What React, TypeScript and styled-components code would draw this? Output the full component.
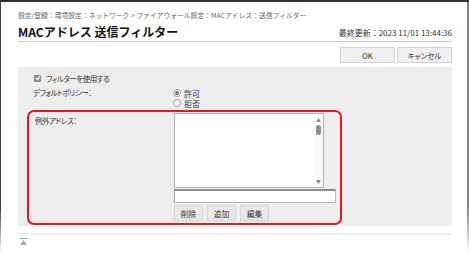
import React from "react";
import styled, { createGlobalStyle } from "styled-components";

const GlobalStyle = createGlobalStyle`
  html, body { margin: 0; padding: 0; background: #fff; }
  body { font-family: "Noto Sans CJK JP", "Noto Sans", sans-serif; }
  * { box-sizing: border-box; }
`;

const Frame = styled.div`
  position: relative;
  width: 469px;
  height: 254px;
  overflow: hidden;
  border-top: 2px solid #333;
  padding: 7px 17px 0 18px;
  background: #fff;
  &::before {
    content: "";
    position: absolute;
    left: 0;
    top: 0;
    bottom: 0;
    width: 1px;
    background: linear-gradient(to bottom, #444 0%, #444 82%, rgba(68,68,68,0) 100%);
  }
  &::after {
    content: "";
    position: absolute;
    right: 0;
    top: 0;
    bottom: 0;
    width: 2px;
    background: linear-gradient(to bottom, #808080 0%, #808080 80%, rgba(128,128,128,0) 100%);
  }
`;

const Breadcrumb = styled.div`
  font-size: 6.8px;
  line-height: 12px;
  height: 12px;
  color: #666;
  white-space: nowrap;
`;

const HeaderRow = styled.div`
  margin-top: 3px;
  display: flex;
  justify-content: space-between;
  align-items: flex-end;
  border-bottom: 1px solid #ccc;
  padding-bottom: 2px;
`;

const Title = styled.h1`
  margin: 0;
  font-size: 12px;
  line-height: 15px;
  font-weight: 700;
  color: #111;
`;

const Updated = styled.div`
  font-size: 8px;
  line-height: 10px;
  color: #333;
  padding-bottom: 1px;
  white-space: nowrap;
`;

const ButtonRow = styled.div`
  margin-top: 5px;
  display: flex;
  justify-content: flex-end;
  gap: 2px;
`;

const MainButton = styled.button`
  width: 55px;
  height: 16px;
  padding: 0;
  background: #efefef;
  border: 1px solid #d2d2d2;
  font-family: inherit;
  font-size: 7.5px;
  font-feature-settings: "palt";
  color: #333;
`;

const Panel = styled.div`
  margin-top: 4px;
  background: #eeeeee;
  padding: 5px 0 1px 9px;
`;

const CheckRow = styled.label`
  height: 12px;
  display: flex;
  align-items: center;
  gap: 5px;
  padding-left: 7px;
  font-size: 7.5px;
  font-feature-settings: "palt";
  letter-spacing: -0.5px;
  color: #333;
`;

const CheckBox = styled.span`
  width: 7px;
  height: 7px;
  border-radius: 1px;
  background: #8c8c8c;
  display: flex;
  align-items: center;
  justify-content: center;
`;

const FieldGrid = styled.div<{ $label: number }>`
  display: grid;
  grid-template-columns: ${(p) => p.$label}px 1fr;
  align-items: start;
`;

const PolicyRow = styled(FieldGrid)`
  margin-top: 4px;
  padding-left: 6px;
`;

const Label = styled.div<{ $top?: number }>`
  font-size: 7.5px;
  line-height: 10px;
  color: #333;
  font-feature-settings: "palt";
  letter-spacing: -0.5px;
  margin-top: ${(p) => p.$top ?? 0}px;
`;

const RadioGroup = styled.div`
  display: flex;
  flex-direction: column;
`;

const RadioItem = styled.label`
  height: 10px;
  display: flex;
  align-items: center;
  gap: 3px;
  font-size: 8px;
  color: #333;
`;

const RadioCircle = styled.span<{ $on?: boolean }>`
  width: 8px;
  height: 8px;
  border-radius: 50%;
  border: 1px solid #9a9a9a;
  background: #fff;
  display: flex;
  align-items: center;
  justify-content: center;
  &::after {
    content: "";
    width: 4px;
    height: 4px;
    border-radius: 50%;
    background: ${(p) => (p.$on ? "#7a7a7a" : "transparent")};
  }
`;

const Highlight = styled(FieldGrid)`
  margin-top: 2px;
  width: 315px;
  border: 2px solid #e8141e;
  border-radius: 7px;
  padding: 1px 4px 2px 6px;
`;

const ValueColumn = styled.div`
  display: flex;
  flex-direction: column;
  align-items: flex-start;
`;

const ListBox = styled.div`
  width: 150px;
  height: 75px;
  background: #fff;
  border: 1px solid #b4b4b4;
  display: flex;
`;

const ListArea = styled.div`
  flex: 1;
`;

const ScrollBar = styled.div`
  width: 9px;
  display: flex;
  flex-direction: column;
  align-items: center;
  padding: 4px 0 3px;
  background: #fbfbfb;
`;

const Thumb = styled.div`
  margin-top: 3px;
  width: 5px;
  height: 10px;
  border-radius: 3px;
  background: #8f8f8f;
`;

const Spacer = styled.div`
  flex: 1;
`;

const TextInput = styled.div`
  margin-top: 1px;
  width: 162px;
  height: 14px;
  background: #fff;
  border: 1px solid #b8b8b8;
  border-top: 2px solid #8e8e8e;
  border-left-color: #a0a0a0;
`;

const ActionRow = styled.div`
  margin-top: 2px;
  display: flex;
  gap: 4px;
`;

const SmallButton = styled.button`
  width: 29px;
  height: 16px;
  padding: 0;
  background: #e8e8e8;
  border: 1px solid #d6d6d6;
  font-family: inherit;
  font-size: 7.8px;
  color: #333;
`;

const Divider = styled.div`
  margin-top: 7px;
  height: 2px;
  background: #efefef;
`;

const TopLink = styled.div`
  margin: 3px 0 0 2px;
  width: 7px;
  height: 7px;
  display: flex;
`;

const Arrow = ({ up }: { up?: boolean }) => (
  <svg width="5" height="4" viewBox="0 0 5 4">
    <polygon points={up ? "2.5,0 5,4 0,4" : "0,0 5,0 2.5,4"} fill="#888" />
  </svg>
);

export default function App() {
  return (
    <>
      <GlobalStyle />
      <Frame>
        <Breadcrumb>
          設定/登録：環境設定：ネットワーク &gt; ファイアウォール設定：MACアドレス：送信フィルター
        </Breadcrumb>
        <HeaderRow>
          <Title>MACアドレス 送信フィルター</Title>
          <Updated>最終更新：2023 11/01 13:44:36</Updated>
        </HeaderRow>
        <ButtonRow>
          <MainButton>OK</MainButton>
          <MainButton>キャンセル</MainButton>
        </ButtonRow>
        <Panel>
          <CheckRow>
            <CheckBox>
              <svg width="6" height="6" viewBox="0 0 6 6">
                <polyline points="1,3 2.4,4.5 5,1.3" fill="none" stroke="#fff" strokeWidth="1.2" />
              </svg>
            </CheckBox>
            フィルターを使用する
          </CheckRow>
          <PolicyRow $label={140}>
            <Label>デフォルトポリシー：</Label>
            <RadioGroup>
              <RadioItem>
                <RadioCircle $on />
                許可
              </RadioItem>
              <RadioItem>
                <RadioCircle />
                拒否
              </RadioItem>
            </RadioGroup>
          </PolicyRow>
          <Highlight $label={139}>
            <Label $top={3}>例外アドレス：</Label>
            <ValueColumn>
              <ListBox>
                <ListArea />
                <ScrollBar>
                  <Arrow up />
                  <Thumb />
                  <Spacer />
                  <Arrow />
                </ScrollBar>
              </ListBox>
              <TextInput />
              <ActionRow>
                <SmallButton>削除</SmallButton>
                <SmallButton>追加</SmallButton>
                <SmallButton>編集</SmallButton>
              </ActionRow>
            </ValueColumn>
          </Highlight>
        </Panel>
        <Divider />
        <TopLink>
          <svg width="7" height="7" viewBox="0 0 7 7">
            <rect x="0" y="0" width="7" height="1" fill="#999" />
            <polygon points="3.5,2 7,7 0,7" fill="#aaa" />
          </svg>
        </TopLink>
      </Frame>
    </>
  );
}
